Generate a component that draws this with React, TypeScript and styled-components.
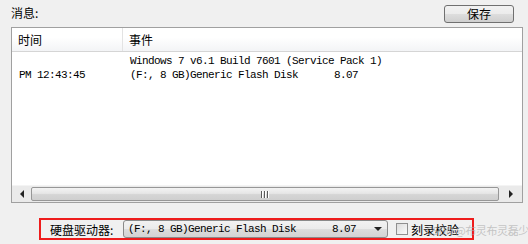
import styled, { createGlobalStyle } from "styled-components";

const GlobalStyle = createGlobalStyle`
  html, body {
    margin: 0;
    padding: 0;
    background: #f0f0f0;
  }
  body {
    width: 528px;
    height: 244px;
    overflow: hidden;
    font-family: "Noto Sans CJK SC", "Liberation Sans", sans-serif;
    font-size: 12px;
    color: #000;
  }
`;

const mono = `"Liberation Mono", "Noto Sans CJK SC", monospace`;

const Window = styled.div`
  position: relative;
  width: 528px;
  height: 244px;
  display: flex;
  flex-direction: column;
`;

const TopBar = styled.div`
  height: 27px;
  display: flex;
  align-items: flex-start;
  justify-content: space-between;
  padding: 0 14px 0 11px;
  box-sizing: border-box;
`;

const Caption = styled.span`
  margin-top: 5px;
  font-size: 12px;
  line-height: 16px;
`;

const Button = styled.button`
  margin-top: 5px;
  width: 70px;
  height: 18px;
  padding: 0;
  border: 1px solid #707070;
  border-radius: 3px;
  background: linear-gradient(#f2f2f2 0%, #ebebeb 50%, #dddddd 51%, #cfcfcf 100%);
  font-family: "Noto Sans CJK SC", sans-serif;
  font-size: 12px;
  line-height: 14px;
  color: #000;
`;

const List = styled.div`
  margin-left: 11px;
  width: 512px;
  height: 176px;
  border: 1px solid #a0a0a0;
  box-sizing: border-box;
  background: #fff;
  display: flex;
  flex-direction: column;
`;

const HeaderRow = styled.div`
  height: 24px;
  display: flex;
  background: linear-gradient(#ffffff 0%, #ffffff 40%, #f3f4f6 100%);
  border-bottom: 1px solid #d5d5d5;
  box-sizing: border-box;
`;

const HeaderCell = styled.div<{ $w?: number }>`
  width: ${({ $w }) => ($w ? `${$w}px` : "auto")};
  flex: ${({ $w }) => ($w ? "none" : "1")};
  padding-left: 6px;
  box-sizing: border-box;
  border-right: ${({ $w }) => ($w ? "1px solid #e3e3e3" : "none")};
  line-height: 23px;
  font-size: 12px;
`;

const Body = styled.div`
  flex: 1;
  padding-top: 2px;
`;

const Row = styled.div`
  height: 14px;
  display: flex;
  font-family: ${mono};
  font-size: 11px;
  letter-spacing: -0.6px;
  line-height: 14px;
  white-space: pre;
`;

const Cell = styled.div<{ $w?: number }>`
  width: ${({ $w }) => ($w ? `${$w}px` : "auto")};
  flex: ${({ $w }) => ($w ? "none" : "1")};
  padding-left: 7px;
  box-sizing: border-box;
`;

const ScrollBar = styled.div`
  height: 17px;
  display: flex;
  background: #eaeaea;
  border-top: 1px solid #f4f4f4;
  box-sizing: border-box;
`;

const ArrowBtn = styled.div<{ $w: number }>`
  width: ${({ $w }) => $w}px;
  display: flex;
  align-items: center;
  justify-content: center;
`;

const Thumb = styled.div`
  flex: 1;
  margin: 1px 0;
  border: 1px solid #979797;
  border-radius: 2px;
  background: linear-gradient(#f3f3f3 0%, #e6e6e6 45%, #d5d5d5 55%, #cfcfcf 100%);
  display: flex;
  align-items: center;
  justify-content: center;
`;

const Grip = styled.div`
  display: flex;
  gap: 1px;
`;

const GripLine = styled.span`
  width: 1px;
  height: 7px;
  background: #5a5a5a;
  box-shadow: 1px 0 0 #fff;
  margin-right: 1px;
`;

const Footer = styled.div`
  flex: 1;
  display: flex;
  align-items: flex-start;
  padding: 15px 0 0 39px;
`;

const Marked = styled.div`
  width: 435px;
  height: 22px;
  border: 2px solid #ee1c1c;
  box-sizing: border-box;
  display: flex;
  align-items: center;
  padding-left: 9px;
`;

const Label = styled.span`
  width: 73px;
  font-size: 12px;
`;

const Combo = styled.div`
  width: 265px;
  height: 18px;
  border: 1px solid #8a8a8a;
  border-radius: 3px;
  box-sizing: border-box;
  background: linear-gradient(#f2f2f2 0%, #ebebeb 50%, #dddddd 51%, #d3d3d3 100%);
  display: flex;
  align-items: center;
  padding: 0 5px 0 4px;
  font-family: ${mono};
  font-size: 11px;
  letter-spacing: -0.6px;
  white-space: pre;
`;

const ComboText = styled.span`
  flex: 1;
`;

const Check = styled.label`
  margin-left: 8px;
  display: flex;
  align-items: center;
  gap: 3px;
  font-size: 12px;
`;

const Box = styled.span`
  width: 12px;
  height: 12px;
  border: 1px solid #8f8f8f;
  box-sizing: border-box;
  background: linear-gradient(135deg, #dcdcdc, #fafafa);
`;

const Watermark = styled.span`
  position: absolute;
  left: 426px;
  top: 222px;
  font-size: 11px;
  letter-spacing: -0.4px;
  color: rgba(175, 175, 175, 0.7);
  white-space: nowrap;
  pointer-events: none;
`;

const Tri = ({ dir }: { dir: "l" | "r" | "d" }) => {
  const pts = dir === "l" ? "4,0 4,8 0,4" : dir === "r" ? "0,0 0,8 4,4" : "0,0 8,0 4,4";
  const w = dir === "d" ? 8 : 4;
  const h = dir === "d" ? 4 : 8;
  return (
    <svg width={w} height={h} viewBox={`0 0 ${w} ${h}`}>
      <polygon points={pts} fill="#222" />
    </svg>
  );
};

const rows = [
  { time: "", event: "Windows 7 v6.1 Build 7601 (Service Pack 1)" },
  { time: "PM 12:43:45", event: "(F:, 8 GB)Generic Flash Disk      8.07" },
];

export default function App() {
  return (
    <Window>
      <GlobalStyle />
      <TopBar>
        <Caption>消息:</Caption>
        <Button>保存</Button>
      </TopBar>
      <List>
        <HeaderRow>
          <HeaderCell $w={111}>时间</HeaderCell>
          <HeaderCell>事件</HeaderCell>
        </HeaderRow>
        <Body>
          {rows.map((r, i) => (
            <Row key={i}>
              <Cell $w={111}>{r.time}</Cell>
              <Cell>{r.event}</Cell>
            </Row>
          ))}
        </Body>
        <ScrollBar>
          <ArrowBtn $w={19}>
            <Tri dir="l" />
          </ArrowBtn>
          <Thumb>
            <Grip>
              <GripLine />
              <GripLine />
              <GripLine />
            </Grip>
          </Thumb>
          <ArrowBtn $w={23}>
            <Tri dir="r" />
          </ArrowBtn>
        </ScrollBar>
      </List>
      <Footer>
        <Marked>
          <Label>硬盘驱动器:</Label>
          <Combo>
            <ComboText>(F:, 8 GB)Generic Flash Disk      8.07</ComboText>
            <Tri dir="d" />
          </Combo>
          <Check>
            <Box />
            刻录校验
          </Check>
        </Marked>
      </Footer>
      <Watermark>CSDN @布灵布灵磊少</Watermark>
    </Window>
  );
}
